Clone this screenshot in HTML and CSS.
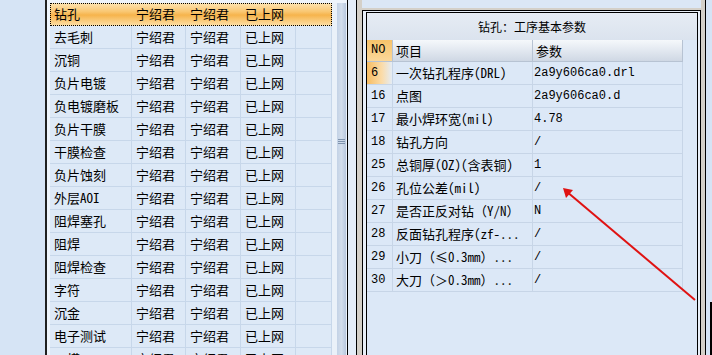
FILE: index.html
```html
<!doctype html>
<html>
    <head>
        <meta charset="utf-8">
        <link rel="stylesheet" href="styles.css">
    </head>
    <body>
        <div class="screen">
            <div class="side"></div>
            <div class="listpane">
                <div class="list">
                    <div class="row sel"><span class="c1">钻孔</span><span class="c2">宁绍君</span><span class="c3">宁绍君</span><span class="c4">已上网</span><span class="c5"></span></div>
                    <div class="row"><span class="c1">去毛刺</span><span class="c2">宁绍君</span><span class="c3">宁绍君</span><span class="c4">已上网</span><span class="c5"></span></div>
                    <div class="row"><span class="c1">沉铜</span><span class="c2">宁绍君</span><span class="c3">宁绍君</span><span class="c4">已上网</span><span class="c5"></span></div>
                    <div class="row"><span class="c1">负片电镀</span><span class="c2">宁绍君</span><span class="c3">宁绍君</span><span class="c4">已上网</span><span class="c5"></span></div>
                    <div class="row"><span class="c1">负电镀磨板</span><span class="c2">宁绍君</span><span class="c3">宁绍君</span><span class="c4">已上网</span><span class="c5"></span></div>
                    <div class="row"><span class="c1">负片干膜</span><span class="c2">宁绍君</span><span class="c3">宁绍君</span><span class="c4">已上网</span><span class="c5"></span></div>
                    <div class="row"><span class="c1">干膜检查</span><span class="c2">宁绍君</span><span class="c3">宁绍君</span><span class="c4">已上网</span><span class="c5"></span></div>
                    <div class="row"><span class="c1">负片蚀刻</span><span class="c2">宁绍君</span><span class="c3">宁绍君</span><span class="c4">已上网</span><span class="c5"></span></div>
                    <div class="row"><span class="c1">外层AOI</span><span class="c2">宁绍君</span><span class="c3">宁绍君</span><span class="c4">已上网</span><span class="c5"></span></div>
                    <div class="row"><span class="c1">阻焊塞孔</span><span class="c2">宁绍君</span><span class="c3">宁绍君</span><span class="c4">已上网</span><span class="c5"></span></div>
                    <div class="row"><span class="c1">阻焊</span><span class="c2">宁绍君</span><span class="c3">宁绍君</span><span class="c4">已上网</span><span class="c5"></span></div>
                    <div class="row"><span class="c1">阻焊检查</span><span class="c2">宁绍君</span><span class="c3">宁绍君</span><span class="c4">已上网</span><span class="c5"></span></div>
                    <div class="row"><span class="c1">字符</span><span class="c2">宁绍君</span><span class="c3">宁绍君</span><span class="c4">已上网</span><span class="c5"></span></div>
                    <div class="row"><span class="c1">沉金</span><span class="c2">宁绍君</span><span class="c3">宁绍君</span><span class="c4">已上网</span><span class="c5"></span></div>
                    <div class="row"><span class="c1">电子测试</span><span class="c2">宁绍君</span><span class="c3">宁绍君</span><span class="c4">已上网</span><span class="c5"></span></div>
                    <div class="row"><span class="c1">一模</span><span class="c2">宁绍君</span><span class="c3">宁绍君</span><span class="c4">已上网</span><span class="c5"></span></div>
                </div>
                <div class="vscroll">
                    <div class="thumb"><i></i><i></i><i></i></div>
                </div>
            </div>
            <div class="gap"></div>
            <div class="detail">
                <div class="cap"></div>
                <div class="inner">
                    <div class="grid">
                        <div class="title">钻孔：工序基本参数</div>
                        <div class="head">
                            <span class="no cur">NO</span><span class="name">项目</span><span class="val">参数</span>
                        </div>
                        <div class="prow"><span class="no cur">6</span><span class="name">一次钻孔程序(DRL)</span><span class="val">2a9y606ca0.drl</span></div>
                        <div class="prow"><span class="no">16</span><span class="name">点图</span><span class="val">2a9y606ca0.d</span></div>
                        <div class="prow"><span class="no">17</span><span class="name">最小焊环宽(mil)</span><span class="val">4.78</span></div>
                        <div class="prow"><span class="no">18</span><span class="name">钻孔方向</span><span class="val">/</span></div>
                        <div class="prow"><span class="no">25</span><span class="name">总铜厚(OZ)(含表铜)</span><span class="val">1</span></div>
                        <div class="prow"><span class="no">26</span><span class="name">孔位公差(mil)</span><span class="val">/</span></div>
                        <div class="prow"><span class="no">27</span><span class="name">是否正反对钻（Y/N）</span><span class="val">N</span></div>
                        <div class="prow"><span class="no">28</span><span class="name">反面钻孔程序(zf-...</span><span class="val">/</span></div>
                        <div class="prow"><span class="no">29</span><span class="name">小刀（≤0.3mm）...</span><span class="val">/</span></div>
                        <div class="prow"><span class="no">30</span><span class="name">大刀（＞0.3mm）...</span><span class="val">/</span></div>
                    </div>
                </div>
            </div>
            <div class="edge"><div class="edge-line"></div></div>
            <svg class="arrow" width="712" height="355" viewBox="0 0 712 355">
                <line x1="695" y1="300" x2="566" y2="191" stroke="#e01212" stroke-width="2"/>
                <polygon points="563,188 573,190 566,198" fill="#e01212"/>
            </svg>
        </div>
    </body>
</html>
```

FILE: styles.css
```css
*{
    margin: 0;
    padding: 0;
    box-sizing: border-box;
}
body{
    width: 712px;
    height: 355px;
    overflow: hidden;
    background: #d6e4f5;
    font-family: "Noto Sans Mono CJK SC", "Noto Sans CJK SC", "Liberation Sans", sans-serif;
    font-size: 13px;
    color: #000;
}
.screen{
    display: flex;
    height: 355px;
    position: relative;
}
.side{
    width: 45px;
    flex: none;
}

/* left list */
.listpane{
    display: flex;
    flex: none;
    border-left: 2px solid #202020;
    border-right: 1px solid #000;
    padding: 3px 0 0 3px;
    background: #eef4fb;
}
.list{
    width: 282px;
}
.row{
    display: flex;
    height: 23px;
    line-height: 22px;
    border-bottom: 1px solid #c7d7ea;
    background: #dde9f7;
}
.row span{
    height: 22px;
    padding-left: 4px;
    border-right: 1px solid #c7d7ea;
    white-space: nowrap;
    overflow: hidden;
}
.c1{ width: 82px; }
.c2{ width: 54px; }
.c3{ width: 55px; }
.c4{ width: 55px; }
.c5{ width: 36px; }
.row.sel{
    background: linear-gradient(#fde4b2, #f9c670 40%, #f6b44c 55%, #fcdca0);
    outline: 1px dotted #000;
    outline-offset: -1px;
    border-bottom-color: transparent;
}
.row.sel span{
    border-right-color: transparent;
}
.vscroll{
    width: 15px;
    padding-left: 5px;
    background: #eaf1f9;
}
.thumb{
    height: 100%;
    width: 9px;
    background: linear-gradient(90deg, #c3d2e6, #d3deec 50%, #b8c8de);
    padding-top: 136px;
}
.thumb i{
    display: block;
    width: 7px;
    height: 1px;
    margin: 0 0 1px 1px;
    background: #7f93ad;
}
.gap{
    width: 8px;
    flex: none;
    background: #e4edf8;
}

/* right detail panel */
.detail{
    flex: none;
    display: flex;
    flex-direction: column;
    width: 350px;
    border-left: 1px solid #000;
    border-right: 1px solid #000;
    padding: 0 4px 0 5px;
    background: #d4d0c8;
}
.cap{
    flex: none;
    height: 8px;
    margin-bottom: 2px;
    background: #dbe7f5;
}
.inner{
    flex: 1;
    border: 1px solid #000;
    border-bottom: none;
    padding: 1px 2px 0 3px;
    background: #e8eff8;
}
.grid{
    height: 100%;
    border: 1px solid #000;
    border-bottom: none;
    background: #dce8f7;
}
.title{
    height: 27px;
    line-height: 27px;
    text-align: center;
    font-size: 12px;
    background: linear-gradient(#e6ecf4, #dbe3ee);
}
.head, .prow{
    display: flex;
    width: 316px;
    height: 23px;
    line-height: 22px;
}
.head{
    height: 22px;
    line-height: 21px;
    background: linear-gradient(#f5f8fb, #e2e8f0 50%, #cfd8e4);
    border-bottom: 1px solid #b7c3d3;
}
.head span{
    border-right: 1px solid #b7c3d3;
}
.prow{
    border-bottom: 1px solid #c7d5e7;
}
.prow span{
    border-right: 1px solid #c7d5e7;
    white-space: nowrap;
    overflow: hidden;
}
.no{
    width: 26px;
    padding-left: 4px;
    font-family: "Liberation Mono", monospace;
    font-size: 12px;
}
.name{
    width: 140px;
    padding-left: 3px;
}
.val{
    width: 150px;
    padding-left: 1px;
    font-family: "Liberation Mono", "Noto Sans CJK SC", monospace;
    font-size: 12px;
}
.head .val{
    padding-left: 3px;
    font-family: "Noto Sans Mono CJK SC", "Noto Sans CJK SC", sans-serif;
    font-size: 13px;
}
.head .no.cur{
    background: linear-gradient(#f7c36a, #fbd89a);
}
.prow .no.cur{
    background: linear-gradient(90deg, #f7bd62, #fbdcaa 60%, #e4ecf5);
}
.edge{
    flex: none;
    width: 6px;
    padding: 302px 0 0 4px;
}
.edge-line{
    height: 100%;
    border-left: 2px solid #000;
}
.arrow{
    position: absolute;
    left: 0;
    top: 0;
    pointer-events: none;
}
```
